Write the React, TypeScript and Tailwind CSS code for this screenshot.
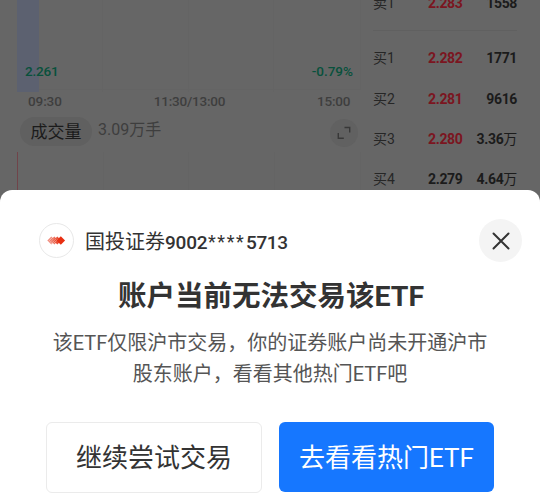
import { ReactNode } from 'react';

interface OrderRowProps {
  label: string;
  price: string;
  amount: string;
  unit?: string;
  up?: boolean;
}

function OrderRow({ label, price, amount, unit, up }: OrderRowProps) {
  return (
    <div className="flex h-[40.4px] shrink-0 items-center leading-none">
      <span className="w-[55px] text-[14px] text-[#262626]">{label}</span>
      <span
        className={
          up
            ? 'w-[35px] text-[14px] font-bold tracking-[-0.35px] text-[#7b1520]'
            : 'w-[35px] text-[14px] font-bold tracking-[-0.35px] text-[#1b1b1b]'
        }
      >
        {price}
      </span>
      <span className="flex-1 text-right text-[14px] font-bold tracking-[-0.35px] text-[#1b1b1b]">
        {amount}
        {unit && <span className="font-normal">{unit}</span>}
      </span>
    </div>
  );
}

interface GridProps {
  className: string;
  children?: ReactNode;
}

function Grid({ className, children }: GridProps) {
  return (
    <div className={`grid grid-cols-4 border-r border-[#646464] ${className}`}>
      <div className="border-r border-[#646464]">{children}</div>
      <div className="border-r border-[#646464]" />
      <div className="border-r border-[#646464]" />
      <div />
    </div>
  );
}

function Chart() {
  return (
    <div className="flex w-[361px] shrink-0 flex-col">
      <div className="relative h-[92px] shrink-0">
        <Grid className="ml-[17px] h-[90px] border-b">
          <div className="h-[92px] w-[22px] bg-[#5c6170]" />
        </Grid>
        <div className="absolute inset-x-0 top-[62px] flex justify-between pr-[8px] pl-[25px] text-[13.5px] leading-[18px] font-medium text-[#08513c]">
          <span className="tracking-[-0.2px]">2.261</span>
          <span>-0.79%</span>
        </div>
      </div>
      <div className="flex h-[18px] shrink-0 justify-between pr-[10px] pl-[28px] text-[13.5px] leading-[18px] font-medium text-[#3e3e3e]">
        <span className="w-[34px] tracking-[-0.1px]">09:30</span>
        <span className="tracking-[-0.2px]">11:30/13:00</span>
        <span className="w-[34px] tracking-[-0.2px]">15:00</span>
      </div>
      <div className="mt-[7px] flex h-[29px] shrink-0 items-center pr-[3px] pl-[20px]">
        <span className="flex h-[29px] w-[72px] items-center justify-center rounded-full bg-[#606060] pt-[2px] text-[17px] text-[#1b1b1b]">
          成交量
        </span>
        <span className="mb-[3px] ml-[6px] text-[16px] leading-none text-[#3e3e3e]">
          3.09万手
        </span>
        <span className="mt-[3px] ml-auto flex size-[28px] items-center justify-center rounded-full bg-[#616161]">
          <svg
            width="14"
            height="14"
            viewBox="0 0 14 14"
            fill="none"
            stroke="#383838"
            strokeWidth="1.4"
          >
            <path d="M7.5 1.5H12.7V6.5M1.3 7V12.3H6.8" />
          </svg>
        </span>
      </div>
      <Grid className="mt-[6px] ml-[17px] h-[38px] shrink-0 border-l border-l-[#70444a]" />
    </div>
  );
}

function OrderBook() {
  return (
    <div className="ml-[12px] flex w-[144px] flex-col">
      <div className="-mt-[17px] h-[47px] shrink-0">
        <OrderRow label="卖1" price="2.283" amount="1558" up />
      </div>
      <div className="mb-[7px] border-t border-[#606060]" />
      <OrderRow label="买1" price="2.282" amount="1771" up />
      <OrderRow label="买2" price="2.281" amount="9616" up />
      <OrderRow label="买3" price="2.280" amount="3.36" unit="万" up />
      <OrderRow label="买4" price="2.279" amount="4.64" unit="万" />
    </div>
  );
}

function BrokerLogo() {
  return (
    <span className="flex size-[35px] items-center justify-center rounded-full border border-[#e8e8e8]">
      <svg width="19" height="9" viewBox="0 0 19 9">
        <path d="M4.3.5 8.3 4.5 4.3 8.5.3 4.5Z" fill="#f18c7d" />
        <path d="M7.3.5 11.3 4.5 7.3 8.5 3.3 4.5Z" fill="#ec6f5b" />
        <path d="M10.3.5 14.3 4.5 10.3 8.5 6.3 4.5Z" fill="#e94f36" />
        <path
          d="M1.5 5.5 5.3 1.7M2.7 6.7 6.5 2.9M3.9 7.9 9.1 2.7M6.2 7.9 11 3.1"
          stroke="#fbdcd7"
          strokeWidth=".5"
        />
        <path d="M13.8.2 18.1 4.5 13.8 8.8 9.5 4.5Z" fill="#e82f12" />
      </svg>
    </span>
  );
}

function Sheet() {
  return (
    <div className="h-[305px] rounded-t-[12px] bg-white">
      <div className="flex h-[101px] items-center pr-[18px] pl-[39px]">
        <BrokerLogo />
        <p className="mt-[3px] ml-[11px] flex text-[20px] leading-none whitespace-nowrap text-[#333]">
          国投证券
          <span className="w-[43px] pt-px text-[19px] font-medium tracking-[-0.2px]">
            9002
          </span>
          <span className="w-[38px] pt-px text-[18px] tracking-[1.6px]">
            ****
          </span>
          <span className="pt-px text-[19px] font-medium tracking-[-0.4px]">
            5713
          </span>
        </p>
        <button className="ml-auto flex size-[43px] items-center justify-center rounded-full bg-[#f4f4f4]">
          <svg
            width="18"
            height="18"
            viewBox="0 0 18 18"
            stroke="#333"
            strokeWidth="2"
            strokeLinecap="round"
          >
            <path d="M1.5 1.5 16.5 16.5M16.5 1.5 1.5 16.5" />
          </svg>
        </button>
      </div>
      <h1 className="-mt-[14px] pl-[2px] text-center text-[28.5px] leading-[40px] font-bold text-[#333]">
        账户当前无法交易该ETF
      </h1>
      <p className="mt-[11px] text-center text-[20px] leading-[31px] whitespace-nowrap text-[#555]">
        该ETF仅限沪市交易，你的证券账户尚未开通沪市
        <br />
        股东账户，看看其他热门ETF吧
      </p>
      <div className="mt-[32px] flex gap-[17px] pl-[46px]">
        <button className="h-[71px] w-[216px] rounded-[6px] border border-[#ebebeb] pt-[2px] text-[26px] text-[#333]">
          继续尝试交易
        </button>
        <button className="h-[70px] w-[215px] rounded-[6px] bg-[#1677ff] pt-[2px] text-[26px] text-white">
          去看看热门ETF
        </button>
      </div>
    </div>
  );
}

function App() {
  return (
    <div className="h-[495px] w-[540px] overflow-hidden bg-[#666] font-['Roboto','Noto_Sans_CJK_SC',sans-serif]">
      <div className="flex h-[190px] overflow-hidden">
        <Chart />
        <OrderBook />
      </div>
      <Sheet />
    </div>
  );
}

export default App;
